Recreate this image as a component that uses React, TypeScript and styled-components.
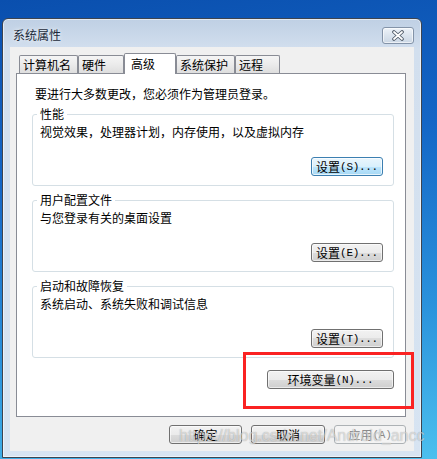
import React from "react";
import styled, { createGlobalStyle, css } from "styled-components";

const Global = createGlobalStyle`
  html, body { margin: 0; padding: 0; }
  body { font-family: "Noto Sans CJK SC", "Liberation Sans", sans-serif; font-size: 12px; }
  * { box-sizing: border-box; }
`;

const Desktop = styled.div`
  position: relative;
  width: 437px;
  height: 459px;
  overflow: hidden;
  padding: 18px 0 0 2px;
  background: linear-gradient(172deg, #0a4fae 0%, #1466c6 35%, #2a92dc 70%, #4cc0ee 100%);
`;

const Window = styled.div`
  width: 420px;
  height: 440px;
  border: 1px solid #3d4450;
  border-radius: 6px 6px 0 0;
  box-shadow: inset 0 0 0 1px rgba(255, 255, 255, 0.55);
  background: linear-gradient(180deg, #bfd0e4 0px, #d2dfee 30px, #d7e4f2 100%);
  display: flex;
  flex-direction: column;
`;

const TitleBar = styled.div`
  height: 28px;
  display: flex;
  justify-content: space-between;
  align-items: flex-start;
  padding: 0 7px 0 10px;
`;

const TitleText = styled.div`
  margin-top: 10px;
  line-height: 12px;
  font-size: 12px;
  color: #1c2a3a;
  text-shadow: 0 0 4px rgba(255, 255, 255, 0.9);
`;

const CloseButton = styled.div`
  margin-top: 8px;
  width: 32px;
  height: 17px;
  border: 1px solid #8393a8;
  border-radius: 3px;
  background: linear-gradient(180deg, #eef3f9 0%, #dbe4ee 50%, #cbd7e5 100%);
  box-shadow: inset 0 0 0 1px rgba(255, 255, 255, 0.6);
  display: flex;
  align-items: center;
  justify-content: center;
`;

const Client = styled.div`
  margin: 0 7px;
  height: 404px;
  background: #f0f0f0;
  padding: 6px 8px 7px 6px;
  display: flex;
  flex-direction: column;
`;

const TabRow = styled.div`
  display: flex;
  align-items: flex-end;
  height: 20px;
  padding-left: 3px;
`;

const Tab = styled.div<{ $w: number; $active?: boolean }>`
  width: ${(p) => p.$w}px;
  height: ${(p) => (p.$active ? 21 : 18)}px;
  margin-bottom: ${(p) => (p.$active ? -1 : 0)}px;
  position: relative;
  z-index: ${(p) => (p.$active ? 1 : 0)};
  border: 1px solid #898c95;
  border-bottom: none;
  border-radius: 2px 2px 0 0;
  display: flex;
  align-items: center;
  font-size: 12px;
  line-height: 12px;
  color: #000;
  ${(p) =>
    p.$active
      ? css`
          background: #fff;
          padding: 0 0 1px 6px;
        `
      : css`
          background: linear-gradient(180deg, #f5f5f5 0%, #ebebeb 50%, #dedede 100%);
          padding: 1px 0 0 3px;
        `}
`;

const Panel = styled.div`
  height: 344px;
  border: 1px solid #898c95;
  background: #fff;
  padding: 14px 11px 0 15px;
  display: flex;
  flex-direction: column;
`;

const Intro = styled.div`
  margin: 0 0 8px 3px;
  line-height: 12px;
  color: #000;
`;

const Group = styled.fieldset<{ $last?: boolean }>`
  margin: 0 0 ${(p) => (p.$last ? 12 : 8)}px 0;
  min-width: 0;
  border: 1px solid #d5dfe5;
  border-radius: 3px;
  padding: 0 10px 9px 4px;
`;

const Legend = styled.legend`
  padding: 0 3px;
  line-height: 12px;
  font-size: 12px;
  color: #000;
`;

const GroupBody = styled.div`
  display: flex;
  flex-direction: column;
`;

const Desc = styled.div`
  margin: 6px 0 0 3px;
  line-height: 12px;
  color: #000;
`;

const SettingsSlot = styled.div`
  margin-top: 19px;
  display: flex;
  justify-content: flex-end;
`;

const EnvSlot = styled.div`
  display: flex;
  justify-content: flex-end;
`;

const Btn = styled.div<{ $w: number; $variant?: "normal" | "focus" | "disabled" }>`
  width: ${(p) => p.$w}px;
  height: 19px;
  border-radius: 3px;
  display: flex;
  align-items: center;
  justify-content: center;
  font-size: 12px;
  line-height: 12px;
  ${(p) =>
    p.$variant === "focus"
      ? css`
          border: 1px solid #3c7fb1;
          background: linear-gradient(180deg, #eaf6fd 0%, #d9f0fc 50%, #bee6fd 50%, #a7d9f5 100%);
          box-shadow: inset 0 0 0 1px rgba(255, 255, 255, 0.7);
          color: #000;
        `
      : p.$variant === "disabled"
      ? css`
          border: 1px solid #adb2b5;
          background: #f4f4f4;
          color: #8a8a8a;
        `
      : css`
          border: 1px solid #707070;
          background: linear-gradient(180deg, #f2f2f2 0%, #ebebeb 50%, #dddddd 50%, #cfcfcf 100%);
          box-shadow: inset 0 0 0 1px rgba(255, 255, 255, 0.6);
          color: #000;
        `}
`;

const Accel = styled.span`
  font-family: "Liberation Mono", monospace;
  font-size: 11px;
  letter-spacing: -0.3px;
`;

const Footer = styled.div`
  margin-top: 8px;
  display: flex;
  justify-content: flex-end;
  gap: 9px;
`;

const Highlight = styled.div`
  position: absolute;
  left: 243px;
  top: 352px;
  width: 171px;
  height: 57px;
  border: 3px solid #fa2222;
  pointer-events: none;
`;

const Watermark = styled.div`
  position: absolute;
  left: 179px;
  top: 426px;
  font-family: "Liberation Sans", Arial, sans-serif;
  font-size: 16px;
  line-height: 20px;
  color: rgba(255, 255, 255, 0.55);
  text-shadow: 0 0 1px rgba(0, 0, 0, 0.35);
  pointer-events: none;
  white-space: nowrap;
`;

const CloseIcon = () => (
  <svg width="14" height="11" viewBox="0 0 14 11">
    <path d="M3 2 L11 9 M11 2 L3 9" stroke="#4d5866" strokeWidth="3.6" strokeLinecap="round" />
    <path d="M3 2 L11 9 M11 2 L3 9" stroke="#ffffff" strokeWidth="1.8" strokeLinecap="round" />
  </svg>
);

const Button = ({
  w,
  variant,
  label,
  accel,
}: {
  w: number;
  variant?: "normal" | "focus" | "disabled";
  label: string;
  accel?: string;
}) => (
  <Btn $w={w} $variant={variant}>
    {label}
    {accel && <Accel>{accel}</Accel>}
  </Btn>
);

const tabs = [
  { label: "计算机名", w: 59 },
  { label: "硬件", w: 46 },
  { label: "高级", w: 52, active: true },
  { label: "系统保护", w: 59 },
  { label: "远程", w: 45 },
];

const groups = [
  { title: "性能", desc: "视觉效果，处理器计划，内存使用，以及虚拟内存", accel: "(S)...", focus: true },
  { title: "用户配置文件", desc: "与您登录有关的桌面设置", accel: "(E)..." },
  { title: "启动和故障恢复", desc: "系统启动、系统失败和调试信息", accel: "(T)..." },
];

export default function App() {
  return (
    <>
      <Global />
      <Desktop>
        <Window>
          <TitleBar>
            <TitleText>系统属性</TitleText>
            <CloseButton>
              <CloseIcon />
            </CloseButton>
          </TitleBar>
          <Client>
            <TabRow>
              {tabs.map((t) => (
                <Tab key={t.label} $w={t.w} $active={t.active}>
                  {t.label}
                </Tab>
              ))}
            </TabRow>
            <Panel>
              <Intro>要进行大多数更改，您必须作为管理员登录。</Intro>
              {groups.map((g, i) => (
                <Group key={g.title} $last={i === groups.length - 1}>
                  <Legend>{g.title}</Legend>
                  <GroupBody>
                    <Desc>{g.desc}</Desc>
                    <SettingsSlot>
                      <Button w={72} variant={g.focus ? "focus" : "normal"} label="设置" accel={g.accel} />
                    </SettingsSlot>
                  </GroupBody>
                </Group>
              ))}
              <EnvSlot>
                <Button w={127} label="环境变量" accel="(N)..." />
              </EnvSlot>
            </Panel>
            <Footer>
              <Button w={73} label="确定" />
              <Button w={74} label="取消" />
              <Button w={72} variant="disabled" label="应用" accel="(A)" />
            </Footer>
          </Client>
        </Window>
        <Highlight />
        <Watermark>https://blog.csdn.net/Android_ancc</Watermark>
      </Desktop>
    </>
  );
}
